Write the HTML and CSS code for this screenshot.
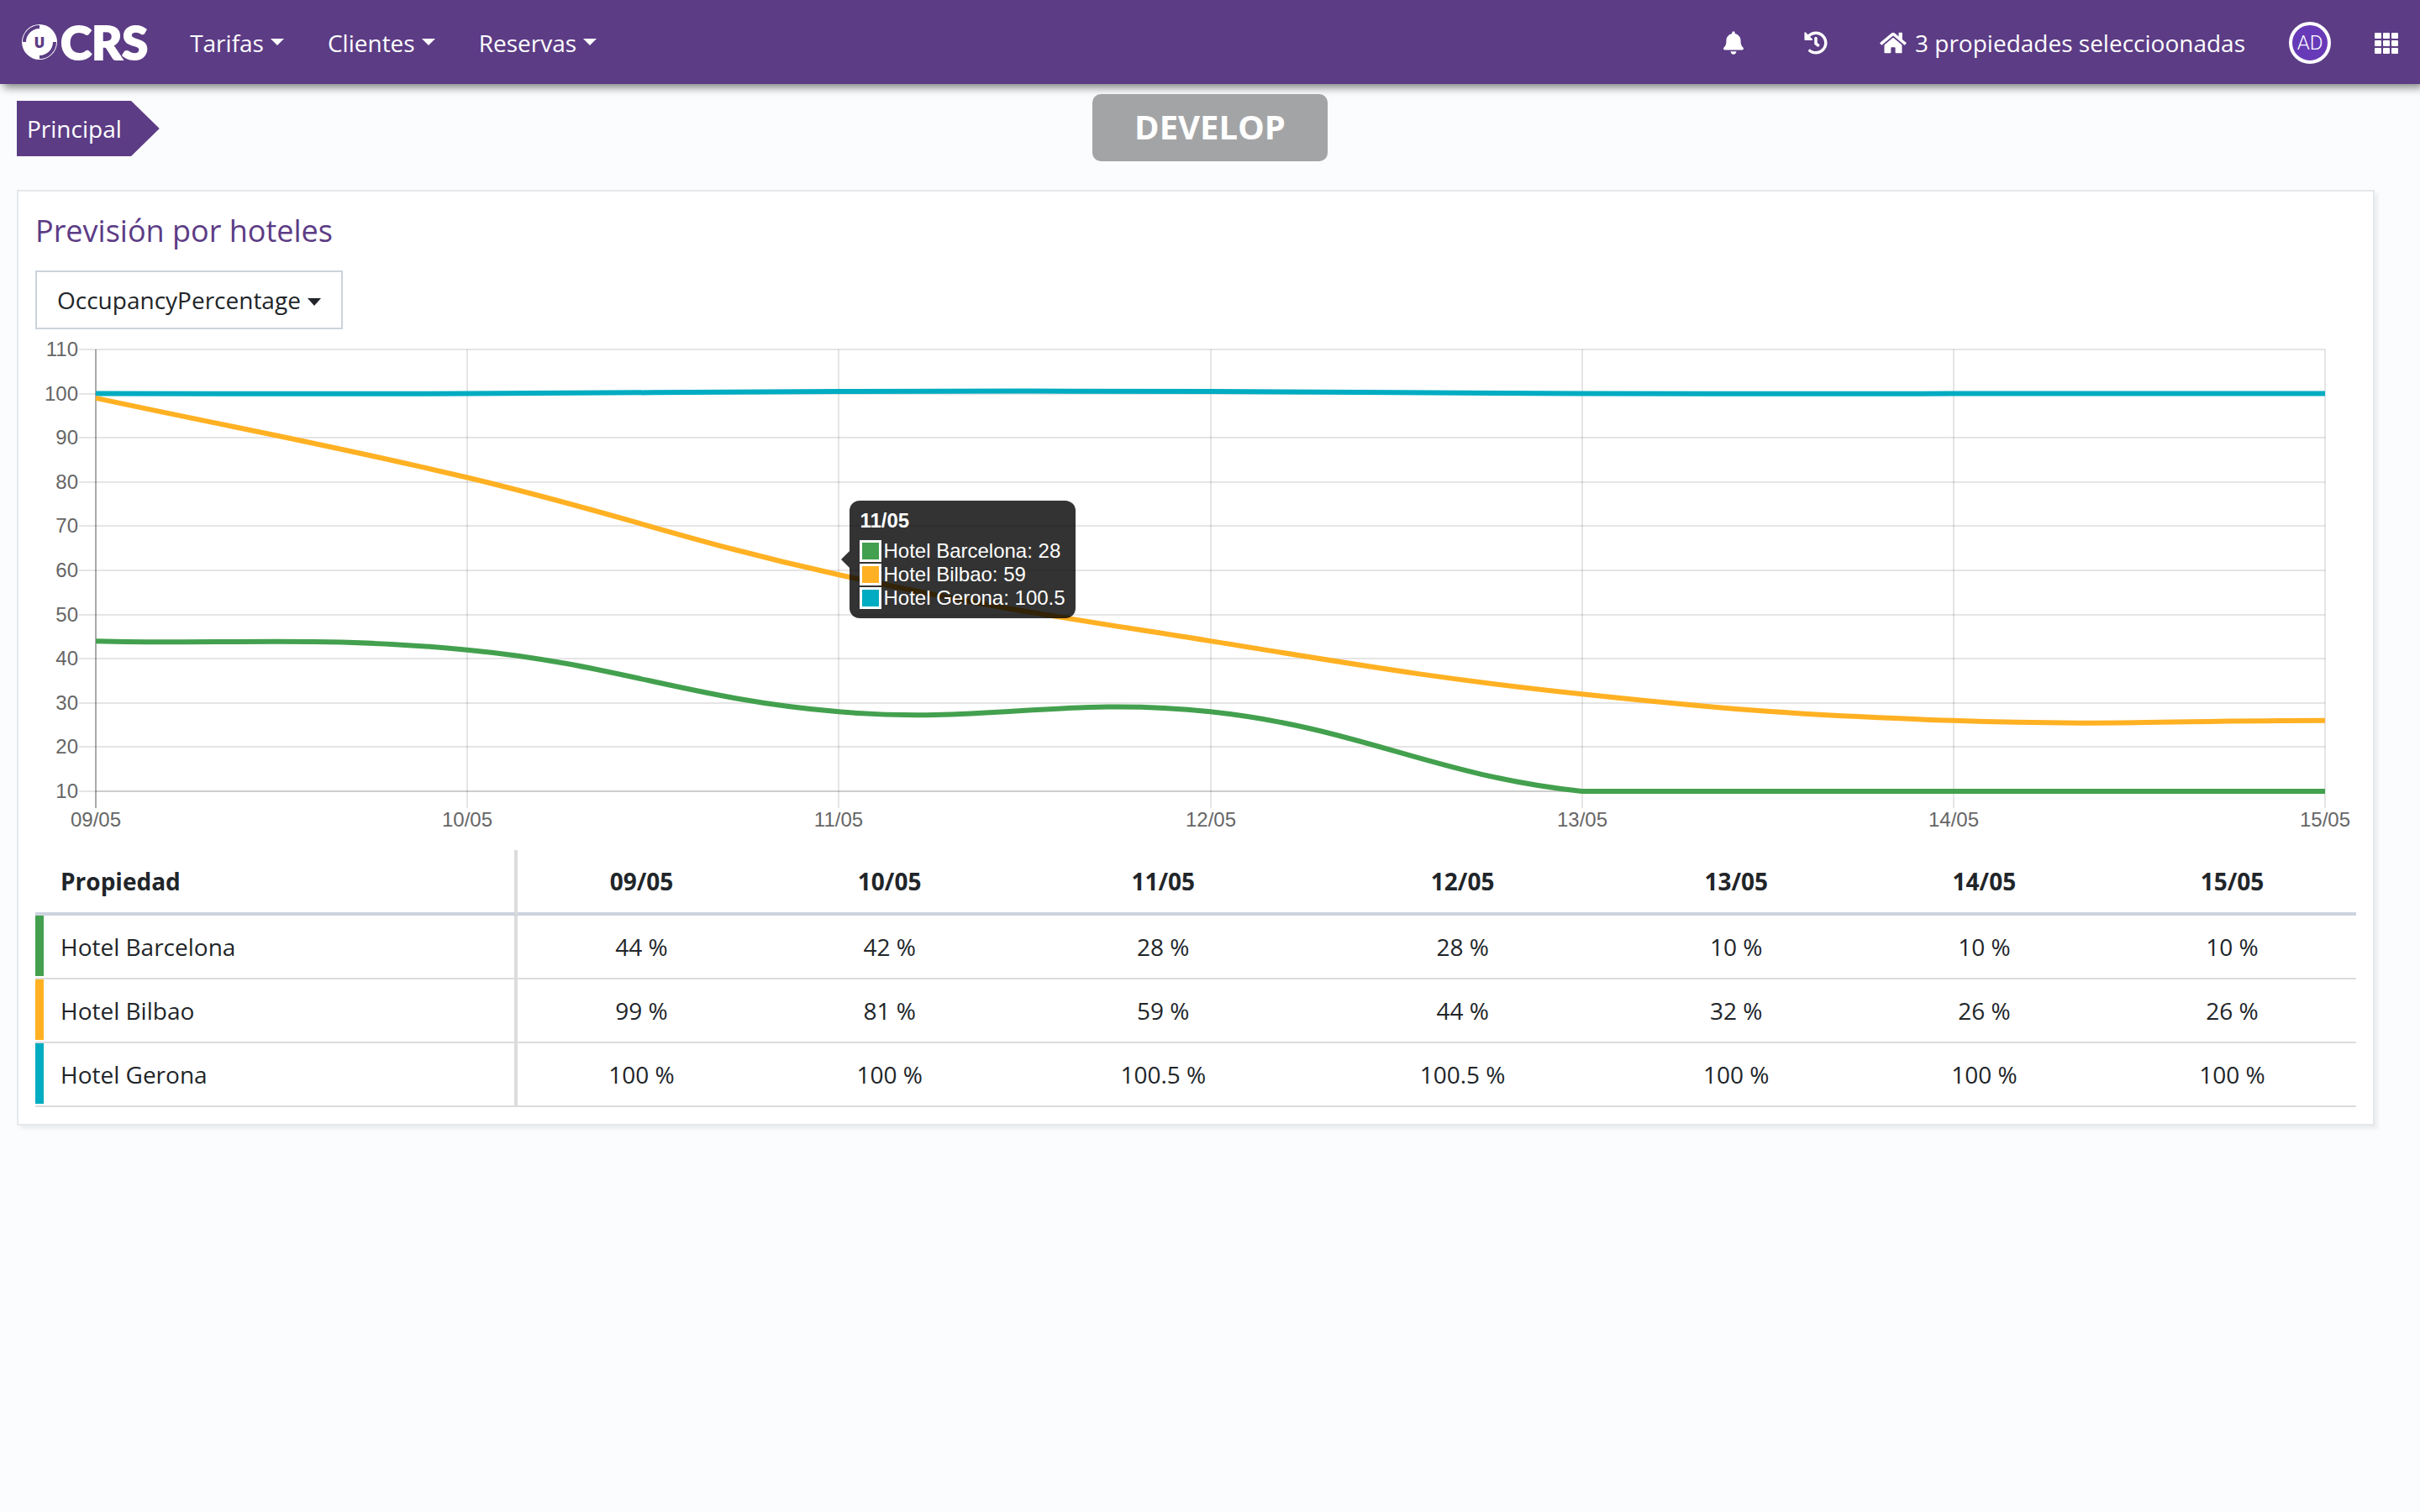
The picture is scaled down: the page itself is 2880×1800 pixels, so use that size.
FILE: index.html
```html
<!DOCTYPE html>
<html lang="es">
<head>
    <meta charset="UTF-8">
    <title>UCRS</title>
    <meta name="viewport" content="width=device-width, initial-scale=1.0">
    <link rel="stylesheet" href="styles.css">
</head>
<body>
    <nav class="navbar">
        <a class="logo" href="#" aria-label="UCRS">
            <svg class="logo-mark" viewBox="0 0 42 42">
                <circle cx="21" cy="21" r="21" fill="#fff"/>
                <path d="M3 21A18 18 0 0 1 21 3" fill="none" stroke="#5c3c85" stroke-width="4"/>
                <path d="M39 21A18 18 0 0 1 21 39" fill="none" stroke="#5c3c85" stroke-width="4"/>
                <text x="21" y="28" text-anchor="middle">U</text>
            </svg>
            <span>CRS</span>
        </a>
        <button class="nav-link">Tarifas</button>
        <button class="nav-link">Clientes</button>
        <button class="nav-link">Reservas</button>
        <div class="nav-right">
            <button class="icon-btn" aria-label="Notificaciones">
                <svg class="icon-bell" viewBox="0 0 448 512"><path d="M224 512c35.320 0 63.970-28.650 63.970-64H160.030c0 35.350 28.650 64 63.970 64zm215.390-149.710c-19.320-20.760-55.470-51.990-55.470-154.290 0-77.700-54.480-139.900-127.940-155.160V32c0-17.670-14.320-32-31.980-32s-31.980 14.330-31.980 32v20.840C118.560 68.100 64.080 130.300 64.080 208c0 102.300-36.150 133.530-55.470 154.290-6 6.450-8.660 14.160-8.610 21.710.11 16.400 12.980 32 32.100 32h383.800c19.120 0 32-15.600 32.100-32 .05-7.550-2.610-15.270-8.610-21.710z"/></svg>
            </button>
            <button class="icon-btn history" aria-label="Historial">
                <svg class="icon-history" viewBox="0 0 512 512"><path d="M504 255.531c.253 136.640-111.180 248.372-247.820 248.468-59.015.042-113.223-20.530-155.822-54.911-11.077-8.940-11.905-25.541-1.839-35.607l11.267-11.267c8.609-8.609 22.353-9.551 31.891-1.984C173.062 425.135 212.781 440 256 440c101.705 0 184-82.311 184-184 0-101.705-82.311-184-184-184-48.814 0-93.149 18.969-126.068 49.932l50.754 50.754c10.080 10.080 2.941 27.314-11.313 27.314H24c-8.837 0-16-7.163-16-16V38.627c0-14.254 17.234-21.393 27.314-11.314l49.372 49.372C129.209 34.136 189.552 8 256 8c136.810 0 247.747 110.780 248 247.531zm-180.912 78.784l9.823-12.630c8.138-10.463 6.253-25.542-4.210-33.679L288 256.349V152c0-13.255-10.745-24-24-24h-16c-13.255 0-24 10.745-24 24v135.651l65.409 50.874c10.463 8.137 25.541 6.253 33.679-4.210z"/></svg>
            </button>
            <button class="properties">
                <svg class="icon-home" viewBox="0 0 576 512"><path d="M280.370 148.260L96 300.110V464a16 16 0 0 0 16 16l112.060-.29a16 16 0 0 0 15.920-16V368a16 16 0 0 1 16-16h64a16 16 0 0 1 16 16v95.640a16 16 0 0 0 16 16.050L464 480a16 16 0 0 0 16-16V300L295.670 148.260a12.190 12.190 0 0 0-15.300 0zM571.600 251.470L488 182.560V44.050a12 12 0 0 0-12-12h-56a12 12 0 0 0-12 12v72.610L318.470 43a48 48 0 0 0-61 0L4.340 251.470a12 12 0 0 0-1.600 16.900l25.500 31A12 12 0 0 0 45.150 301l235.220-193.740a12.190 12.190 0 0 1 15.300 0L530.900 301a12 12 0 0 0 16.900-1.600l25.500-31a12 12 0 0 0-1.700-16.930z"/></svg>
                3 propiedades seleccioonadas
            </button>
            <button class="avatar">AD</button>
            <button class="icon-btn" aria-label="Aplicaciones">
                <svg class="icon-grid" viewBox="0 0 28 25">
                    <rect x="0" y="0" width="8" height="7" rx="1"/><rect x="10" y="0" width="8" height="7" rx="1"/><rect x="20" y="0" width="8" height="7" rx="1"/>
                    <rect x="0" y="9" width="8" height="7" rx="1"/><rect x="10" y="9" width="8" height="7" rx="1"/><rect x="20" y="9" width="8" height="7" rx="1"/>
                    <rect x="0" y="18" width="8" height="7" rx="1"/><rect x="10" y="18" width="8" height="7" rx="1"/><rect x="20" y="18" width="8" height="7" rx="1"/>
                </svg>
            </button>
        </div>
    </nav>
    <div class="env-badge">DEVELOP</div>

    <div class="breadcrumb"><a href="#">Principal</a></div>

    <main class="card">
        <h1>Previsión por hoteles</h1>
        <button class="dropdown">OccupancyPercentage</button>
        <div class="chart">
            <svg id="chart" viewBox="0 0 2762 602" role="img" aria-label="Previsión por hoteles"></svg>
            <div class="tooltip">
                <strong>11/05</strong>
                <div class="tooltip-row"><i class="green"></i>Hotel Barcelona: 28</div>
                <div class="tooltip-row"><i class="orange"></i>Hotel Bilbao: 59</div>
                <div class="tooltip-row"><i class="teal"></i>Hotel Gerona: 100.5</div>
            </div>
        </div>
        <table>
            <colgroup>
                <col class="col-name"><col><col><col class="col-wide"><col class="col-wide"><col><col><col>
            </colgroup>
            <thead>
                <tr><th>Propiedad</th><th>09/05</th><th>10/05</th><th>11/05</th><th>12/05</th><th>13/05</th><th>14/05</th><th>15/05</th></tr>
            </thead>
            <tbody>
                <tr><td class="green">Hotel Barcelona</td><td>44 %</td><td>42 %</td><td>28 %</td><td>28 %</td><td>10 %</td><td>10 %</td><td>10 %</td></tr>
                <tr><td class="orange">Hotel Bilbao</td><td>99 %</td><td>81 %</td><td>59 %</td><td>44 %</td><td>32 %</td><td>26 %</td><td>26 %</td></tr>
                <tr><td class="teal">Hotel Gerona</td><td>100 %</td><td>100 %</td><td>100.5 %</td><td>100.5 %</td><td>100 %</td><td>100 %</td><td>100 %</td></tr>
            </tbody>
        </table>
    </main>
    <script src="chart.js"></script>
</body>
</html>
```
FILE: styles.css
```css
* {
    box-sizing: border-box;
}
body {
    margin: 0;
    background-color: #fbfcfe;
    color: #212529;
    font-family: "Open Sans", "Noto Sans", sans-serif;
    font-size: 28px;
    line-height: 42px;
}
button {
    background: none;
    border: none;
    padding: 0;
    color: inherit;
    font: inherit;
    cursor: pointer;
}
a {
    color: inherit;
    text-decoration: none;
}
.navbar {
    display: flex;
    align-items: center;
    height: 100px;
    padding: 2px 26px 0;
    background-color: #5c3c85;
    color: #fff;
    box-shadow: 4px 4px 10px rgba(0, 0, 0, 0.5);
}
.logo {
    display: flex;
    align-items: center;
    gap: 4px;
    margin-right: 50px;
    padding-bottom: 2px;
    font-family: Lato, sans-serif;
    font-size: 56px;
    font-weight: 900;
    -webkit-text-stroke: 2px #fff;
}
.logo-mark {
    width: 42px;
    height: 42px;
}
.logo-mark text {
    font: 800 17px "Open Sans", sans-serif;
    fill: #5c3c85;
    -webkit-text-stroke: 0;
}
.nav-link {
    margin-right: 52px;
}
.nav-link::after, .dropdown::after {
    content: "";
    display: inline-block;
    margin-left: 8px;
    vertical-align: 8px;
    border-top: 8px solid;
    border-left: 8px solid transparent;
    border-right: 8px solid transparent;
}
.nav-right {
    display: flex;
    align-items: center;
    margin-left: auto;
}
.nav-right svg {
    display: block;
    fill: #fff;
}
.icon-btn {
    margin-right: 72px;
}
.icon-btn.history {
    margin-right: 62px;
}
.icon-btn:last-child {
    margin-right: 0;
}
.icon-bell {
    width: 24px;
    height: 28px;
}
.icon-history {
    width: 28px;
    height: 28px;
}
.icon-grid {
    width: 28px;
    height: 25px;
}
.icon-home {
    width: 32px;
    height: 28px;
}
.properties {
    display: flex;
    align-items: center;
    gap: 10px;
    margin-right: 52px;
}
.avatar {
    width: 50px;
    height: 50px;
    margin-right: 52px;
    border: 4px solid #fff;
    border-radius: 50%;
    background-color: #673ab7;
    font-family: Roboto, sans-serif;
    font-size: 24px;
    font-weight: 300;
}
.env-badge {
    position: absolute;
    top: 112px;
    left: 50%;
    transform: translateX(-50%);
    padding: 9px 50px 11px;
    border-radius: 10px;
    background-color: #a3a4a6;
    color: #fff;
    font-size: 40px;
    font-weight: bold;
    line-height: 60px;
}
.breadcrumb {
    padding: 20px;
}
.breadcrumb a {
    display: inline-block;
    padding: 12px 45px 12px 12px;
    background-color: #5c3c85;
    color: #fff;
    clip-path: polygon(0 0, 136px 0, 100% 50%, 136px 100%, 0 100%);
}
.card {
    margin: 20px 54px 20px 20px;
    padding: 20px;
    border: 2px solid #e4e8ea;
    background-color: #fff;
    box-shadow: 4px 4px 4px rgba(0, 0, 0, 0.06);
}
h1 {
    margin: 0 0 20px;
    color: #5c3c85;
    font-size: 36px;
    font-weight: normal;
    line-height: 54px;
}
.dropdown {
    display: block;
    height: 70px;
    padding: 0 24px;
    border: 2px solid #ccd3dc;
}
.dropdown::after {
    vertical-align: 4px;
    border-top-width: 9px;
}
.chart {
    position: relative;
    margin-bottom: 18px;
}
.chart svg {
    display: block;
    width: 100%;
}
.chart text {
    fill: #666;
    font-family: "Liberation Sans", Arial, sans-serif;
    font-size: 24px;
}
.grid {
    stroke: rgba(0, 0, 0, 0.1);
    stroke-width: 2;
}
.axis {
    stroke: rgba(0, 0, 0, 0.25);
    stroke-width: 2;
}
.line {
    fill: none;
    stroke-width: 6;
}
.tooltip {
    position: absolute;
    top: 204px;
    left: 35.1%;
    padding: 10px 12px;
    border-radius: 12px;
    background-color: rgba(0, 0, 0, 0.8);
    color: #fff;
    font-family: "Liberation Sans", Arial, sans-serif;
    font-size: 24px;
    line-height: 28px;
}
.tooltip::before {
    content: "";
    position: absolute;
    top: 60px;
    right: 100%;
    border: 10px solid transparent;
    border-left: none;
    border-right-color: rgba(0, 0, 0, 0.8);
}
.tooltip strong {
    display: block;
    margin-bottom: 8px;
}
.tooltip-row {
    display: flex;
    align-items: center;
    gap: 2px;
}
.tooltip i {
    width: 26px;
    height: 26px;
    border: 3px solid #fff;
}
.tooltip .green {
    background-color: #43a04e;
}
.tooltip .orange {
    background-color: #ffb123;
}
.tooltip .teal {
    background-color: #00acc1;
}
table {
    width: 100%;
    table-layout: fixed;
    border-collapse: separate;
    border-spacing: 0;
}
.col-name {
    width: 574px;
}
.col-wide {
    width: 12.9%;
}
th, td {
    height: 76px;
    padding: 0;
    border-bottom: 2px solid #dcdcdc;
    text-align: center;
}
th {
    height: 78px;
    border-bottom: 4px solid #cdd3df;
}
th:first-child, td:first-child {
    padding-left: 30px;
    border-right: 4px solid #dcdcdc;
    text-align: left;
}
td:first-child {
    background: linear-gradient(var(--bar), var(--bar)) no-repeat;
    background-size: 10px 72px;
}
td.green {
    --bar: #43a04e;
}
td.orange {
    --bar: #ffb123;
}
td.teal {
    --bar: #00acc1;
}
```
FILE: chart.js
```js
const labels = ['09/05', '10/05', '11/05', '12/05', '13/05', '14/05', '15/05'];
const series = [
    { color: '#00acc1', data: [100, 100, 100.5, 100.5, 100, 100, 100] },
    { color: '#ffb123', data: [99, 81, 59, 44, 32, 26, 26] },
    { color: '#43a04e', data: [44, 42, 28, 28, 10, 10, 10] }
];
const area = { left: 72, right: 2725, top: 24, bottom: 550 };
const tension = 0.4;

function xPos(i) {
    return area.left + i * (area.right - area.left) / (labels.length - 1);
}

function yPos(value) {
    return area.bottom - (value - 10) * (area.bottom - area.top) / 100;
}

function clampY(y) {
    return Math.max(area.top, Math.min(area.bottom, y));
}

// bezier through the points, control points follow the neighbours
function curve(data) {
    const points = data.map((value, i) => ({ x: xPos(i), y: yPos(value) }));
    points.forEach((p, i) => {
        const prev = points[i - 1] || p;
        const next = points[i + 1] || p;
        const d1 = Math.hypot(p.x - prev.x, p.y - prev.y);
        const d2 = Math.hypot(next.x - p.x, next.y - p.y);
        const a = tension * d1 / (d1 + d2);
        const b = tension * d2 / (d1 + d2);
        p.before = [p.x - a * (next.x - prev.x), clampY(p.y - a * (next.y - prev.y))];
        p.after = [p.x + b * (next.x - prev.x), clampY(p.y + b * (next.y - prev.y))];
    });
    let d = `M${points[0].x} ${points[0].y}`;
    for (let i = 1; i < points.length; i++) {
        d += `C${points[i - 1].after} ${points[i].before} ${points[i].x} ${points[i].y}`;
    }
    return d;
}

function drawChart() {
    let svg = '';
    for (let value = 10; value <= 110; value += 10) {
        const y = Math.round(yPos(value));
        svg += `<path class="grid" d="M52 ${y}H${area.right}"/>`;
        svg += `<text x="51" y="${y + 8}" text-anchor="end">${value}</text>`;
    }
    labels.forEach((label, i) => {
        const x = Math.round(xPos(i));
        svg += `<path class="grid" d="M${x} ${area.top}V570"/>`;
        svg += `<text x="${x}" y="592" text-anchor="middle">${label}</text>`;
    });
    svg += `<path class="axis" d="M${area.left} ${area.top}V570"/>`;
    svg += `<path class="grid" d="M${area.left} ${area.bottom}H${area.right}"/>`;
    series.forEach(s => {
        svg += `<path class="line" stroke="${s.color}" d="${curve(s.data)}"/>`;
    });
    document.getElementById('chart').innerHTML = svg;
}

drawChart();
```
